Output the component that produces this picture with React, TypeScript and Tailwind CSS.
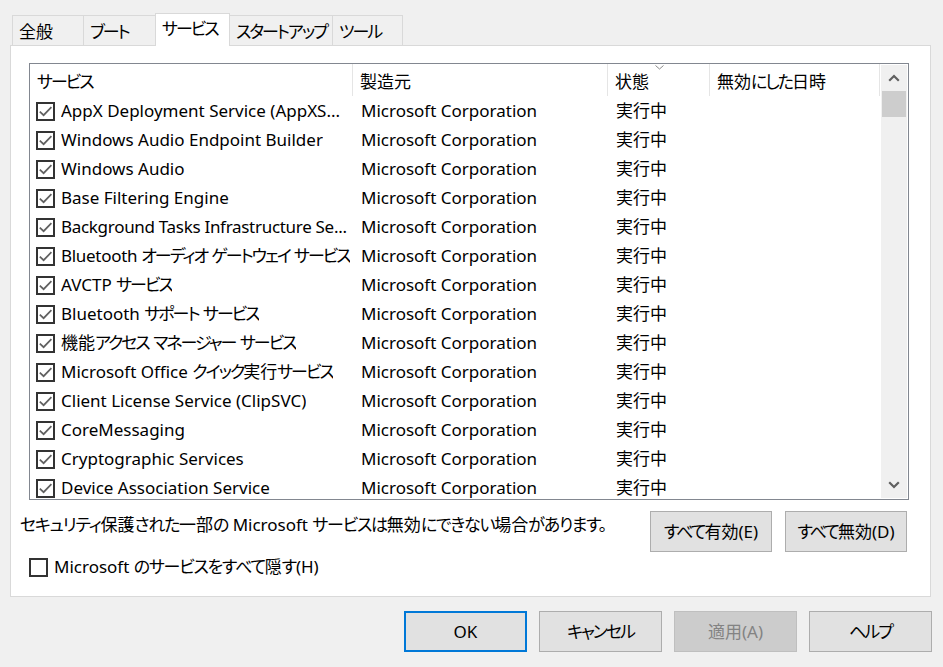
import React from "react";

const rows: { name: string; tight?: boolean }[] = [
  { name: "AppX Deployment Service (AppXS..." },
  { name: "Windows Audio Endpoint Builder" },
  { name: "Windows Audio" },
  { name: "Base Filtering Engine" },
  { name: "Background Tasks Infrastructure Se...", tight: true },
  { name: "Bluetooth オーディオ ゲートウェイ サービス", tight: true },
  { name: "AVCTP サービス" },
  { name: "Bluetooth サポート サービス" },
  { name: "機能アクセス マネージャー サービス" },
  { name: "Microsoft Office クイック実行サービス" },
  { name: "Client License Service (ClipSVC)" },
  { name: "CoreMessaging" },
  { name: "Cryptographic Services" },
  { name: "Device Association Service" },
];

const tabs = [
  { label: "全般", w: "w-[71px]", border: "border-l border-t" },
  { label: "ブート", w: "w-[72px]", border: "border-l border-t" },
  { label: "サービス", w: "w-[75px]", selected: true },
  { label: "スタートアップ", w: "w-[102px]", border: "border-t" },
  { label: "ツール", w: "w-[71px]", border: "border-l border-t border-r" },
];

// kana runs are set tighter so they come out close to Yu Gothic UI widths
function T({ s, loose }: { s: string; loose?: boolean }) {
  const parts = s.split(/([\u3000-\u30ff]+)/);
  return (
    <>
      {parts.map((p, i) =>
        i % 2 ? (
          <span key={i} className={loose ? "tracking-[-1.25px]" : "tracking-[-2px]"}>
            {p}
          </span>
        ) : (
          p
        )
      )}
    </>
  );
}

function CheckBox({ checked }: { checked: boolean }) {
  return (
    <span className="flex h-[19px] w-[19px] shrink-0 items-center justify-center border-2 border-[#333333] bg-white">
      {checked && (
        <svg width="15" height="15" viewBox="0 0 15 15">
          <path d="M1.8 7.6 L5.6 11.2 L13.4 3.2" fill="none" stroke="#606060" strokeWidth="1.7" />
        </svg>
      )}
    </span>
  );
}

function Chevron({ up }: { up: boolean }) {
  return (
    <svg width="12" height="8" viewBox="0 0 12 8">
      <path
        d={up ? "M1.2 6.8 L6 2 L10.8 6.8" : "M1.2 1.2 L6 6 L10.8 1.2"}
        fill="none"
        stroke="#606060"
        strokeWidth="2.2"
      />
    </svg>
  );
}

function Button({ label, wide, primary, disabled }: { label: string; wide?: boolean; primary?: boolean; disabled?: boolean }) {
  return (
    <div
      className={
        "flex h-[41px] items-center justify-center whitespace-nowrap " +
        (wide ? "w-[123px] " : "w-[122px] ") +
        (primary
          ? "border-2 border-[#0078d7] bg-[#e1e1e1] text-black"
          : disabled
          ? "border border-[#bfbfbf] bg-[#cccccc] text-[#838383]"
          : "border border-[#adadad] bg-[#e1e1e1] text-black")
      }
    >
      <T s={label} />
    </div>
  );
}

export default function App() {
  return (
    <div
      className="h-[667px] w-[943px] overflow-hidden bg-[#f0f0f0] text-[17px] leading-[24px] text-black [font-feature-settings:'palt']"
      style={{ fontFamily: '"Noto Sans", "Noto Sans CJK JP", sans-serif' }}
    >
      {/* tabs */}
      <div className="relative z-10 -mb-px flex items-end pl-[12px] pt-[13px]">
        {tabs.map((t) =>
          t.selected ? (
            <div
              key={t.label}
              className={t.w + " h-[33px] whitespace-nowrap border-l border-r border-t border-[#d9d9d9] bg-white pl-[6px] pt-[3px]"}
            >
              <T s={t.label} />
            </div>
          ) : (
            <div
              key={t.label}
              className={t.w + " " + t.border + " mb-px h-[30px] whitespace-nowrap border-[#d9d9d9] bg-[#f0f0f0] pl-[6px] pt-[4px]"}
            >
              <T s={t.label} />
            </div>
          )
        )}
      </div>

      {/* panel */}
      <div className="ml-[10px] h-[552px] w-[921px] border border-[#d9d9d9] bg-white pt-[17px]">
        <div className="ml-[18px] flex h-[437px] w-[880px] border border-[#828790] bg-white">
          <div className="flex min-w-0 flex-1 flex-col overflow-hidden">
            <div className="flex h-[32px] shrink-0">
              <div className="flex w-[323px] items-center border-r border-[#e5e5e5] pl-[7px] pt-[3px]">
                <T s="サービス" />
              </div>
              <div className="flex w-[255px] items-center border-r border-[#e5e5e5] pl-[7px] pt-[3px]">製造元</div>
              <div className="relative flex w-[102px] items-center border-r border-[#e5e5e5] pl-[7px] pt-[3px]">
                状態
                <svg className="absolute left-[47px] top-[1px]" width="9" height="5" viewBox="0 0 9 5">
                  <path d="M0.5 0.5 L4.5 4 L8.5 0.5" fill="none" stroke="#8a8a8a" strokeWidth="1" />
                </svg>
              </div>
              <div className="flex w-[170px] items-center border-r border-[#e5e5e5] pl-[7px] pt-[3px]">
                <T s="無効にした日時" />
              </div>
            </div>
            {rows.map((r) => (
              <div key={r.name} className="flex h-[29px] shrink-0 items-center pt-px">
                <div className="flex w-[323px] items-center gap-[6px] pl-[6px]">
                  <CheckBox checked />
                  <span className={"overflow-hidden whitespace-nowrap" + (r.tight ? " tracking-[-0.3px]" : "")}>
                    <T s={r.name} />
                  </span>
                </div>
                <div className="w-[255px] pl-[8px]">Microsoft Corporation</div>
                <div className="w-[102px] pl-[8px]">実行中</div>
                <div className="w-[170px]" />
              </div>
            ))}
          </div>
          <div className="my-px mr-px flex w-[26px] flex-col bg-[#f0f0f0]">
            <div className="flex h-[26px] items-center justify-center">
              <Chevron up />
            </div>
            <div className="mx-px h-[26px] bg-[#cdcdcd]" />
            <div className="flex-1" />
            <div className="flex h-[26px] items-center justify-center">
              <Chevron up={false} />
            </div>
          </div>
        </div>

        <div className="mt-[11px] flex items-start">
          <div className="ml-[9px] whitespace-nowrap pt-[2px]">
            <T s="セキュリティ保護された一部の Microsoft サービスは無効にできない場合があります。" loose />
          </div>
          <div className="ml-auto mr-[23px] flex gap-[13px]">
            <Button label="すべて有効(E)" />
            <Button label="すべて無効(D)" />
          </div>
        </div>

        <div className="ml-[18px] mt-[3px] flex items-center gap-[6px]">
          <CheckBox checked={false} />
          <span>
            <T s="Microsoft のサービスをすべて隠す(H)" loose />
          </span>
        </div>
      </div>

      {/* dialog buttons */}
      <div className="mr-[11px] mt-[14px] flex justify-end gap-[12px]">
        <Button label="OK" wide primary />
        <Button label="キャンセル" wide />
        <Button label="適用(A)" wide disabled />
        <Button label="ヘルプ" wide />
      </div>
    </div>
  );
}
